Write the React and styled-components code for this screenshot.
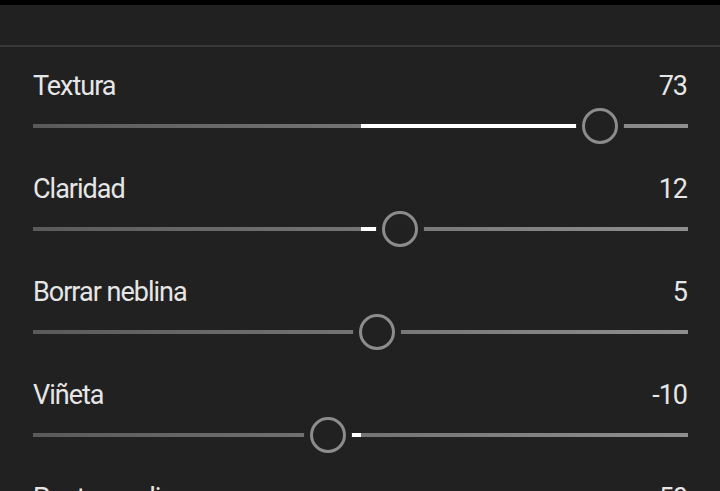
import React from 'react';
import styled, { createGlobalStyle } from 'styled-components';

const Global = createGlobalStyle`
  html, body { margin: 0; padding: 0; background: #212121; }
  body { font-family: Roboto, "Noto Sans", sans-serif; -webkit-font-smoothing: antialiased; }
`;

const Screen = styled.div`
  width: 720px;
  height: 491px;
  overflow: hidden;
  background: #212121;
  display: flex;
  flex-direction: column;
`;

const StatusEdge = styled.div`
  height: 5px;
  flex-shrink: 0;
  background: #000;
`;

const Header = styled.div`
  height: 40px;
  flex-shrink: 0;
`;

const Divider = styled.div`
  height: 2px;
  flex-shrink: 0;
  background: #393939;
`;

const List = styled.div`
  display: flex;
  flex-direction: column;
  padding: 0 32px 0 33px;
`;

const Row = styled.div`
  display: flex;
  flex-direction: column;
  padding-top: 23px;
  flex-shrink: 0;
`;

const LabelLine = styled.div`
  height: 32px;
  line-height: 32px;
  display: flex;
  justify-content: space-between;
  align-items: center;
  font-size: 27px;
  letter-spacing: -1px;
  color: #e6e6e6;
`;

const Value = styled.span`
  margin-right: 1px;
`;

const SliderArea = styled.div`
  position: relative;
  height: 48px;
  display: flex;
  align-items: center;
`;

const Track = styled.div`
  width: 100%;
  height: 4px;
  background: linear-gradient(to right, #5a5a5a, #8e8e8e);
`;

const Fill = styled.div`
  position: absolute;
  top: 22px;
  height: 4px;
  background: #ffffff;
`;

const Thumb = styled.div`
  position: absolute;
  top: 6px;
  width: 36px;
  height: 36px;
  box-sizing: border-box;
  border: 3.5px solid #8c8c8c;
  border-radius: 50%;
  background: #212121;
  box-shadow: 0 0 0 6px #212121;
  transform: translateX(-50%);
`;

const sliders = [
  { label: 'Textura', value: 73 },
  { label: 'Claridad', value: 12 },
  { label: 'Borrar neblina', value: 5 },
  { label: 'Viñeta', value: -10 },
  { label: 'Punto medio', value: 50 },
];

function Slider({ value }) {
  const pct = (value + 100) / 2;
  const left = Math.min(50, pct);
  const width = Math.abs(pct - 50);
  return (
    <SliderArea>
      <Track />
      <Fill style={{ left: `${left}%`, width: `${width}%` }} />
      <Thumb style={{ left: `${pct}%` }} />
    </SliderArea>
  );
}

export default function App() {
  return (
    <>
      <Global />
      <Screen>
        <StatusEdge />
        <Header />
        <Divider />
        <List>
          {sliders.map((s) => (
            <Row key={s.label}>
              <LabelLine>
                <span>{s.label}</span>
                <Value>{s.value}</Value>
              </LabelLine>
              <Slider value={s.value} />
            </Row>
          ))}
        </List>
      </Screen>
    </>
  );
}
